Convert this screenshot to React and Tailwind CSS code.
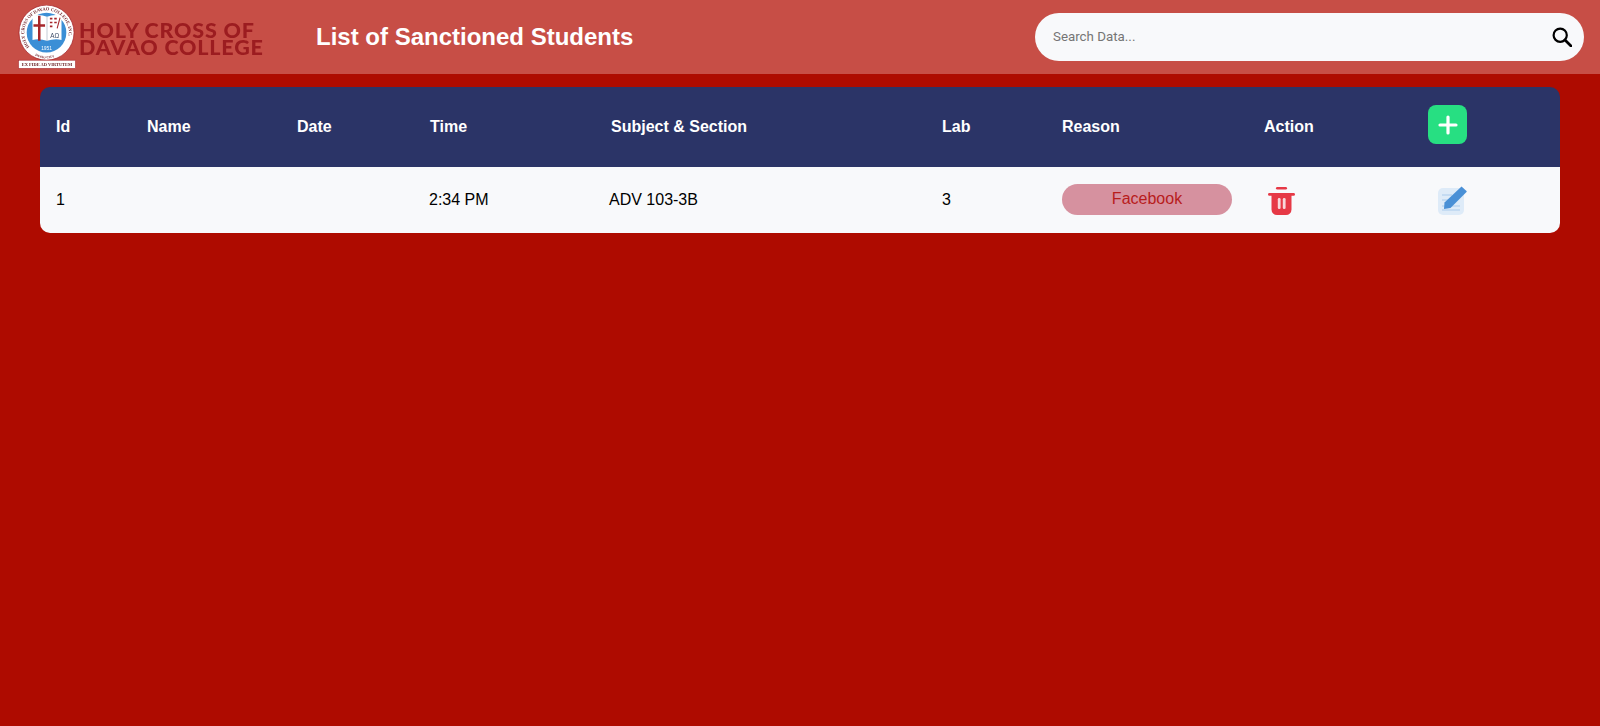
// App.jsx
import React from "react";

const GRID = "grid grid-cols-[91px_150px_133px_181px_331px_120px_202px_164px_1fr] items-center";

const HEADINGS = ["Id", "Name", "Date", "Time", "Subject & Section", "Lab", "Reason", "Action"];

function Seal() {
  return (
    <svg viewBox="0 0 60 66" className="w-[58px] h-[64px] shrink-0 blur-[0.3px]">
      <defs>
        <path id="ring-top" d="M11.9 43.3 A23 23 0 1 1 47.1 43.3" />
        <path id="ring-bottom" d="M17.5 52.2 A26.5 26.5 0 0 0 41.5 52.2" />
      </defs>
      <circle cx="29.5" cy="28.5" r="28.5" fill="#ffffff" stroke="#a5262b" strokeWidth="0.8" />
      <text fill="#6f1f26" fontSize="4.7" fontWeight="700" fontFamily="Liberation Serif, serif">
        <textPath href="#ring-top">HOLY CROSS OF DAVAO COLLEGE, INC.</textPath>
      </text>
      <text fill="#6f1f26" fontSize="3.4" fontWeight="700" fontFamily="Liberation Serif, serif">
        <textPath href="#ring-bottom">DAVAO CITY</textPath>
      </text>
      <circle cx="29.5" cy="28.5" r="20.5" fill="#3b8fd6" />
      <path d="M15 11 q7.5 -2 15 1 q7.5 -3 15 -1 v25 q-7.5 -1.5 -15 1 q-7.5 -2.5 -15 -1z" fill="#ffffff" />
      <path d="M30 12v25" stroke="#9aa7b8" strokeWidth="0.6" />
      <path d="M22 11v26M16 21h12" stroke="#a5262b" strokeWidth="2.6" />
      <path d="M33 14h2.6M33 18h2.6M33 22h2.6M37.5 14h2.6M37.5 18h2.6" stroke="#a5262b" strokeWidth="1.6" />
      <path d="M43.5 13l-3 11" stroke="#a5262b" strokeWidth="1.1" />
      <text x="38" y="34.5" textAnchor="middle" fontSize="6.5" fill="#3a4a66" fontFamily="Liberation Sans, sans-serif">AΩ</text>
      <text x="29.5" y="46" textAnchor="middle" fontSize="5" fill="#ffffff" fontFamily="Liberation Sans, sans-serif">1951</text>
      <rect x="0.5" y="57" width="59" height="8.5" fill="#ffffff" stroke="#a5262b" strokeWidth="0.6" />
      <text x="30" y="63.2" textAnchor="middle" fontSize="4.6" fontWeight="700" fill="#6b2226" fontFamily="Liberation Serif, serif">EX FIDE AD VIRTUTEM</text>
    </svg>
  );
}

function SearchIcon() {
  return (
    <svg viewBox="0 0 20 20" className="w-5 h-5" fill="none" stroke="#000000" strokeWidth="2.2">
      <circle cx="8.2" cy="8.2" r="6.6" />
      <path d="M13 13l6 6" strokeWidth="2.8" strokeLinecap="round" />
    </svg>
  );
}

function TrashIcon() {
  return (
    <svg viewBox="0 0 27 29" className="w-[27px] h-[29px]">
      <rect x="8" y="1" width="11" height="2.4" rx="1.2" fill="#e63946" />
      <rect x="0" y="7" width="27" height="2.8" rx="1.4" fill="#e63946" />
      <path d="M3.5 9h20v14.5a5.5 5.5 0 0 1-5.5 5.5h-9a5.5 5.5 0 0 1-5.5-5.5z" fill="#e63946" />
      <rect x="9.8" y="12" width="2.8" height="11" rx="1.2" fill="#f8d7da" />
      <rect x="14.8" y="12" width="2.8" height="11" rx="1.2" fill="#f8d7da" />
    </svg>
  );
}

function EditIcon() {
  return (
    <svg viewBox="0 0 29 29" className="w-[29px] h-[29px]">
      <rect x="0" y="2" width="26" height="27" rx="5" fill="#deebf8" />
      <path d="M4 9h10M4 14h6M4 20h18M4 24h18" stroke="#bcd6ef" strokeWidth="1.6" />
      <path d="M23.5 0.5L28.5 5Q29 5.5 28.5 6L12.5 22L6 23L6.5 16.5z" fill="#4a90d6" />
    </svg>
  );
}

export default function App() {
  return (
    <div className="min-h-screen bg-[#ae0b00] font-['Liberation_Sans',Arial,sans-serif]">
      <header className="h-[74px] bg-[#c74e46] flex items-center pl-[18px] pr-4">
        <Seal />
        <div className="ml-[3px] mt-[3px] w-[240px] text-[21.5px] leading-[17px] tracking-[0.8px] font-['Lato',sans-serif] font-black text-[#9c1c20] whitespace-nowrap blur-[0.3px]">
          <div>HOLY CROSS OF</div>
          <div>DAVAO COLLEGE</div>
        </div>
        <h1 className="ml-[-3px] text-2xl font-bold text-white">List of Sanctioned Students</h1>
        <div className="ml-auto w-[549px] h-12 rounded-3xl bg-[#f8f9fb] flex items-center pl-[18px] pr-3">
          <input
            placeholder="Search Data..."
            className="flex-1 bg-transparent outline-none text-[13.33px] font-['Roboto',sans-serif] placeholder:text-[#757575]"
          />
          <SearchIcon />
        </div>
      </header>

      <main className="px-10 pt-[13px]">
        <div className="rounded-[10px] overflow-hidden">
          <div className={`${GRID} h-20 bg-[#2b3467] text-white font-bold pl-4`}>
            {HEADINGS.map((h) => (
              <div key={h}>{h}</div>
            ))}
            <div>
              <button className="w-[39px] h-[39px] mb-[5px] rounded-lg bg-[#27df82] flex items-center justify-center">
                <svg viewBox="0 0 20 20" className="w-5 h-5" stroke="#ffffff" strokeWidth="3.2" strokeLinecap="round">
                  <path d="M10 2v16M2 10h16" />
                </svg>
              </button>
            </div>
          </div>
          <div className={`${GRID} h-[66px] bg-[#f8f9fb] text-black pl-4`}>
            <div>1</div>
            <div></div>
            <div></div>
            <div className="-ml-px">2:34 PM</div>
            <div className="-ml-[2px]">ADV 103-3B</div>
            <div>3</div>
            <div className="w-[170px] h-[31px] mb-[2px] rounded-2xl bg-[#d6919f] text-[#b81c1c] flex items-center justify-center">
              Facebook
            </div>
            <div className="pl-[4px] flex">
              <TrashIcon />
            </div>
            <div className="pl-[10px] flex">
              <EditIcon />
            </div>
          </div>
        </div>
      </main>
    </div>
  );
}
